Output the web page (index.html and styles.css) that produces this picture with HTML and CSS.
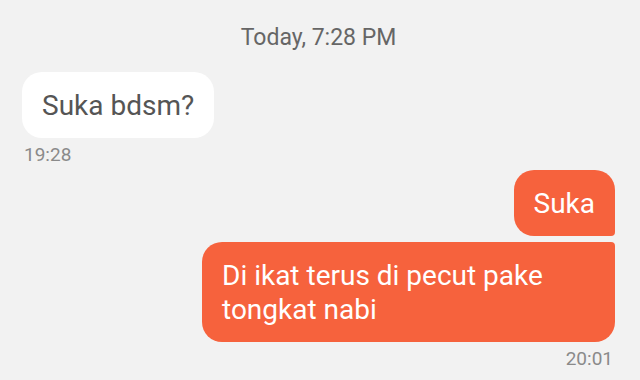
FILE: index.html
```html
<!DOCTYPE html>
<html lang="id">
<head>
    <meta charset="UTF-8">
    <title>Chat</title>
    <link rel="stylesheet" href="styles.css">
</head>
<body>
    <div class="chat">
        <div class="day">Today, 7:28 PM</div>

        <!-- pesan masuk -->
        <div class="msg in">
            <div class="bubble">Suka bdsm?</div>
            <div class="time">19:28</div>
        </div>

        <!-- pesan keluar -->
        <div class="msg out">
            <div class="bubble first">Suka</div>
            <div class="bubble last">Di ikat terus di pecut pake tongkat nabi</div>
            <div class="time">20:01</div>
        </div>
    </div>
</body>
</html>
```

FILE: styles.css
```css
body {
    margin: 0;
    padding: 0;
    background: #f2f2f2;
    font-family: Roboto, "Noto Sans", sans-serif;
}

.chat {
    padding: 24px 25px 0 22px;
    display: flex;
    flex-direction: column;
}

.day {
    text-align: center;
    color: #666;
    font-size: 23px;
    line-height: 28px;
    margin-bottom: 20px;
}

.msg {
    display: flex;
    flex-direction: column;
    gap: 6px;
}
.msg.in {
    align-items: flex-start;
}
.msg.out {
    align-items: flex-end;
    margin-top: 4px;
}

.bubble {
    font-size: 28px;
    font-stretch: 89%;
    line-height: 34px;
    padding: 17px 20px 15px;
    border-radius: 20px;
    max-width: 369px;
}
.in .bubble {
    background: #fff;
    color: #555;
}
.out .bubble {
    background: #f6623d;
    color: #fff;
}
.out .bubble.first {
    border-bottom-right-radius: 4px;
}
.out .bubble.last {
    border-top-right-radius: 4px;
    padding-right: 24px;
}

.time {
    font-size: 19px;
    line-height: 22px;
    color: #8a8a8a;
    padding: 0 2px;
}
```
